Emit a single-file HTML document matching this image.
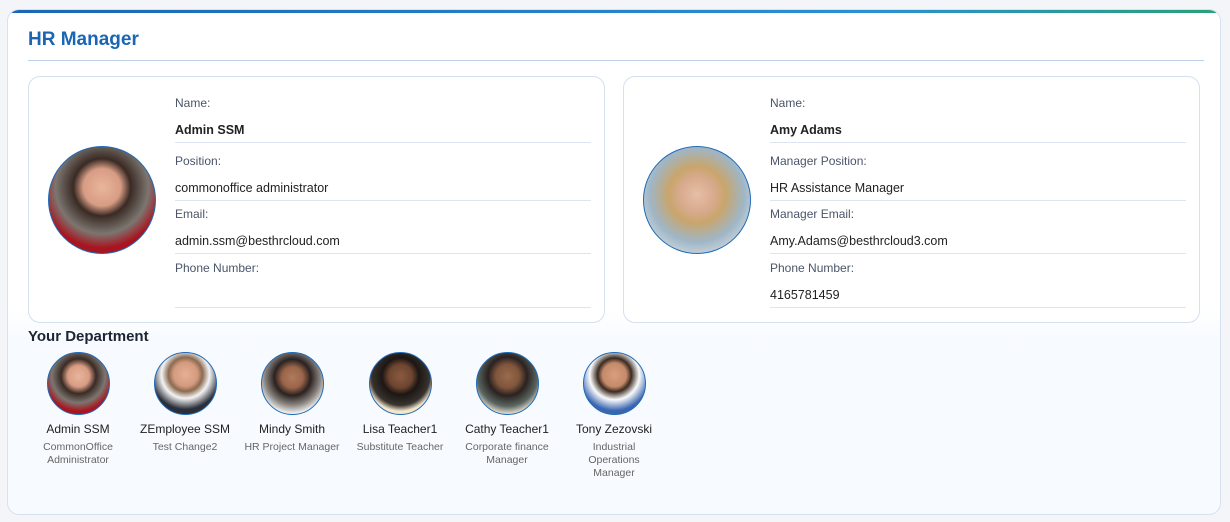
<!DOCTYPE html>
<html><head><meta charset="utf-8"><style>
*{box-sizing:border-box;margin:0;padding:0}
body{width:1230px;height:522px;background:#f3f5f8;font-family:"Liberation Sans",sans-serif;position:relative;overflow:hidden}
.card{position:absolute;left:7px;top:9px;width:1214px;height:506px;border-radius:12px;background:linear-gradient(#fff 0,#fff 300px,#f7faff 330px);border:1px solid #d6e2ef;overflow:hidden}
.bar{position:absolute;left:0;top:0;width:100%;height:3px;background:linear-gradient(90deg,#1a66b5,#2a8fd6 70%,#2aa07a)}
h1{position:absolute;left:20px;top:19px;font-size:19px;color:#1a66b5;font-weight:bold}
.hr{position:absolute;left:20px;top:50px;width:1176px;height:1px;background:#bcd0e6}
.p{position:absolute;top:66px;width:577px;height:247px;border:1px solid #d3e0ee;border-radius:12px;background:#fff}
.av{position:absolute;left:19px;top:69px;width:108px;height:108px;border-radius:50%;border:1.5px solid #1e6bb8;overflow:hidden}
.f{position:absolute;left:146px;width:416px;font-size:12px}
.l{color:#4a5568;height:17px;line-height:17px}
.v{color:#222;font-size:12.5px;height:20px;line-height:14px;margin-top:11px;border-bottom:1px solid #dde6f0}
h2{position:absolute;left:20px;top:318px;font-size:15px;color:#1d2433;font-weight:bold}
.m{position:absolute;top:342px;width:110px;text-align:center}
.m .c{width:63px;height:63px;border-radius:50%;border:1.5px solid #1e6bb8;margin:0 auto;overflow:hidden}
.m .n{font-size:12px;color:#222;margin-top:7px}
.m .r{font-size:10.5px;color:#666;line-height:13px;margin-top:5px}
</style></head><body>
<div class="card"><div class="bar"></div>
<h1>HR Manager</h1><div class="hr"></div>
<div class="p" style="left:20px">
 <div class="av" style="background:radial-gradient(circle at 50% 38%,#e8b59c 0,#d89d84 22%,#3a2a24 34%,#7c7670 55%,#a8141f 72%)"></div>
 <div class="f" style="top:18px"><div class="l">Name:</div><div class="v" style="font-weight:bold">Admin SSM</div></div>
 <div class="f" style="top:76px"><div class="l">Position:</div><div class="v">commonoffice administrator</div></div>
 <div class="f" style="top:129px"><div class="l">Email:</div><div class="v">admin.ssm@besthrcloud.com</div></div>
 <div class="f" style="top:183px"><div class="l">Phone Number:</div><div class="v">&nbsp;</div></div>
</div>
<div class="p" style="left:615px">
 <div class="av" style="background:radial-gradient(circle at 50% 45%,#e6bfa5 0,#d8aa8e 22%,#c9a56c 36%,#9fb6c6 60%,#cfd8de 80%)"></div>
 <div class="f" style="top:18px"><div class="l">Name:</div><div class="v" style="font-weight:bold">Amy Adams</div></div>
 <div class="f" style="top:76px"><div class="l">Manager Position:</div><div class="v">HR Assistance Manager</div></div>
 <div class="f" style="top:129px"><div class="l">Manager Email:</div><div class="v">Amy.Adams@besthrcloud3.com</div></div>
 <div class="f" style="top:183px"><div class="l">Phone Number:</div><div class="v">4165781459</div></div>
</div>
<h2>Your Department</h2>
<div class="m" style="left:15px"><div class="c" style="background:radial-gradient(circle at 50% 38%,#e8b59c 0,#d89d84 22%,#3a2a24 36%,#7c7670 55%,#a8141f 72%)"></div><div class="n">Admin SSM</div><div class="r">CommonOffice<br>Administrator</div></div>
<div class="m" style="left:122px"><div class="c" style="background:radial-gradient(circle at 50% 35%,#e5b196 0,#d49a7e 24%,#8a6a50 34%,#f3f3f3 48%,#2b2f3a 70%)"></div><div class="n">ZEmployee SSM</div><div class="r">Test Change2</div></div>
<div class="m" style="left:229px"><div class="c" style="background:radial-gradient(circle at 50% 40%,#b07a5e 0,#9a654a 22%,#2a2220 38%,#8a8480 58%,#eee 75%)"></div><div class="n">Mindy Smith</div><div class="r">HR Project Manager</div></div>
<div class="m" style="left:337px"><div class="c" style="background:radial-gradient(circle at 50% 38%,#8a5a40 0,#6e4530 24%,#1c1614 38%,#3a3430 60%,#f3e6cc 72%)"></div><div class="n">Lisa Teacher1</div><div class="r">Substitute Teacher</div></div>
<div class="m" style="left:444px"><div class="c" style="background:radial-gradient(circle at 50% 38%,#9a6a4c 0,#80563c 24%,#2a2220 40%,#5a6660 62%,#d8d2c6 76%)"></div><div class="n">Cathy Teacher1</div><div class="r">Corporate finance<br>Manager</div></div>
<div class="m" style="left:551px"><div class="c" style="background:radial-gradient(circle at 50% 36%,#d8a080 0,#c48a6a 24%,#3a2a20 34%,#fafafa 50%,#3a66b0 72%)"></div><div class="n">Tony Zezovski</div><div class="r">Industrial<br>Operations<br>Manager</div></div>
</div>
</body></html>
